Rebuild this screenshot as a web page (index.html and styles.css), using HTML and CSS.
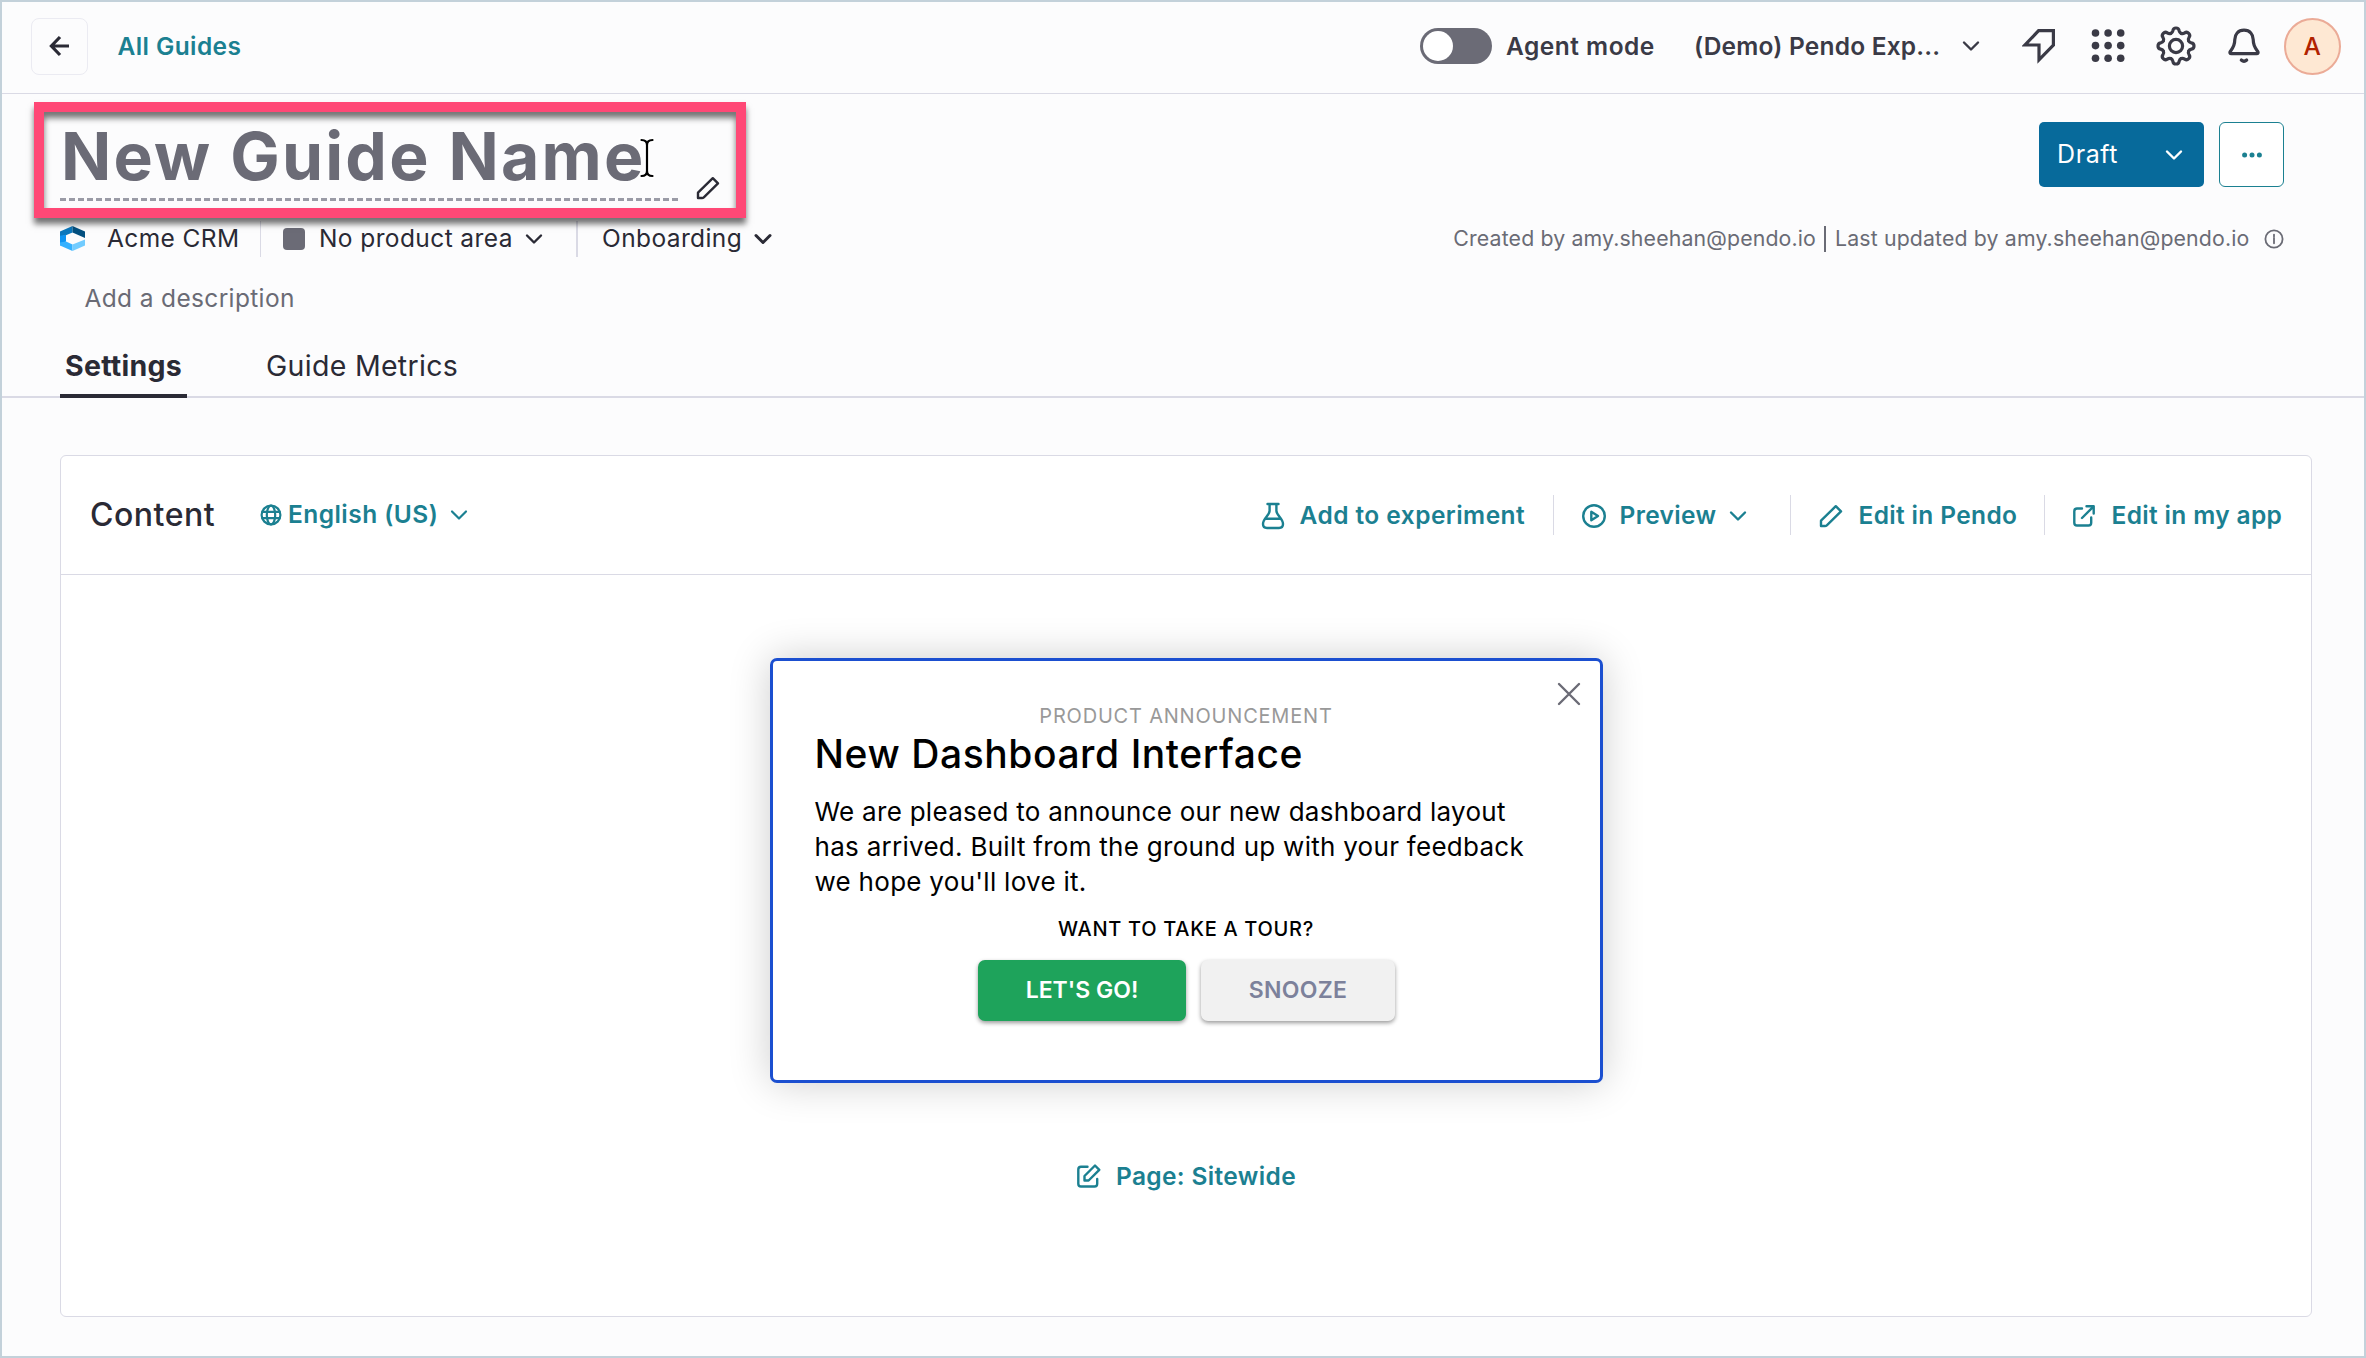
FILE: index.html
```html
<!DOCTYPE html>
<html lang="en">
<head>
<meta charset="utf-8">
<title>New Guide Name</title>
<link rel="stylesheet" href="styles.css">
</head>
<body>
<div class="app">
  <svg width="0" height="0" class="defs" aria-hidden="true">
    <symbol id="chevron" viewBox="0 0 18 12"><path d="M2 2.5 9 9.5 16 2.5"/></symbol>
    <symbol id="pencil" viewBox="0 0 24 24"><path d="M2 22V16.6L16.8 2.2 22 7.4 7.8 21.3Q7 22 6 22Z"/></symbol>
  </svg>

  <header class="topbar">
    <a class="back" aria-label="Back"><svg width="24" height="24" viewBox="0 0 24 24" class="stroke3"><path d="M21 12H3.6M12 3 3.4 12 12 21"/></svg></a>
    <a class="crumb">All Guides</a>
    <div class="tools">
      <span class="toggle"><span class="knob"></span></span>
      <span class="agent">Agent mode</span>
      <span class="account">(Demo) Pendo Exp...</span>
      <svg class="chev" width="18" height="12"><use href="#chevron"/></svg>
      <svg class="flag" width="34" height="36" viewBox="2022 28 34 36"><path d="M2038.6 30.6H2053.4V45.2L2039 59.8V45H2025Z"/></svg>
      <svg class="dots" width="34" height="36" viewBox="2090.5 28 34 36"><g><circle cx="2095" cy="33" r="3.8"/><circle cx="2107.6" cy="33" r="3.8"/><circle cx="2120.2" cy="33" r="3.8"/><circle cx="2095" cy="45.6" r="3.8"/><circle cx="2107.6" cy="45.6" r="3.8"/><circle cx="2120.2" cy="45.6" r="3.8"/><circle cx="2095" cy="58.2" r="3.8"/><circle cx="2107.6" cy="58.2" r="3.8"/><circle cx="2120.2" cy="58.2" r="3.8"/></g></svg>
      <svg class="gear" width="40" height="40" viewBox="-20 -20 40 40">
        <defs><path id="tooth" d="M-5.2-12.6C-3.9-13.1-3.4-14-3.1-15.4C-2.8-17.2-1.6-18 0-18S2.8-17.2 3.1-15.4C3.4-14 3.9-13.1 5.2-12.6"/></defs>
        <use href="#tooth"/><use href="#tooth" transform="rotate(45)"/><use href="#tooth" transform="rotate(90)"/><use href="#tooth" transform="rotate(135)"/><use href="#tooth" transform="rotate(180)"/><use href="#tooth" transform="rotate(225)"/><use href="#tooth" transform="rotate(270)"/><use href="#tooth" transform="rotate(315)"/>
        <circle r="6.6"/>
      </svg>
      <svg class="bell" width="36" height="38" viewBox="2226 27 36 38"><path d="M2244 30.2C2238 30.2 2234.800 34.500 2234.800 39.500C2234.800 46 2232.400 48.600 2230.400 51.200C2229.300 52.700 2230 53.700 2231.500 53.700H2256.500C2258 53.700 2258.700 52.700 2257.600 51.200C2255.600 48.600 2253.200 46 2253.200 39.500C2253.200 34.500 2250 30.200 2244 30.200ZM2241.300 60Q2244 62.600 2246.700 60"/></svg>
      <span class="avatar">A</span>
    </div>
  </header>

  <section class="head">
    <div class="title-row">
      <div class="title-box">
        <h1 class="title">New Guide Name</h1>
        <svg class="title-pencil" width="24" height="24"><use href="#pencil"/></svg>
        <svg class="ibeam" width="20" height="44" viewBox="0 0 20 44"><path class="halo" d="M4.500 4Q10 4 10 9V35Q10 40 4.500 40M15.500 4Q10 4 10 9M10 35Q10 40 15.500 40"/><path d="M4.500 4Q10 4 10 9V35Q10 40 4.500 40M15.500 4Q10 4 10 9M10 35Q10 40 15.500 40"/></svg>
      </div>
      <div class="actions">
        <button class="draft"><span>Draft</span><svg width="18" height="12"><use href="#chevron"/></svg></button>
        <button class="more" aria-label="More"><svg width="24" height="8" viewBox="0 0 24 8"><circle cx="4.600" cy="4" r="2.500"/><circle cx="12" cy="4" r="2.500"/><circle cx="19.400" cy="4" r="2.500"/></svg></button>
      </div>
    </div>

    <div class="meta">
      <svg class="logo" width="25" height="25" viewBox="0 0 25 25">
        <path fill="#0b78bd" d="M0 5.500 12.500 0V6.500L6 9.300 0 10.500Z"/>
        <path fill="#035080" d="M12.500 0 25 5.500V12L12.500 6.500Z"/>
        <path fill="#0d94f2" d="M0 9.800 6 8.800V15.500L0 19.500Z"/>
        <path fill="#35b1ff" d="M0 19.500 0 16.500 6 15.500 12.500 18.500V25Z"/>
        <path fill="#72ccff" d="M12.500 18.500 25 13.500V19.500L12.500 25Z"/>
      </svg>
      <span class="app-name">Acme CRM</span>
      <i class="rule"></i>
      <span class="swatch"></span>
      <span class="area">No product area</span>
      <svg class="chev" width="18" height="12"><use href="#chevron"/></svg>
      <i class="rule thick"></i>
      <span class="segment">Onboarding</span>
      <svg class="chev bold" width="18" height="12"><use href="#chevron"/></svg>
      <div class="credits">
        <span class="created">Created by amy.sheehan@pendo.io</span>
        <i class="bar"></i>
        <span class="updated">Last updated by amy.sheehan@pendo.io</span>
        <svg width="20" height="20" viewBox="0 0 20 20"><circle cx="10" cy="10" r="8.600"/><path d="M10 9V14.300M10 5.600V7.400"/></svg>
      </div>
    </div>

    <p class="description">Add a description</p>

    <nav class="tabs">
      <a class="tab active">Settings</a>
      <a class="tab">Guide Metrics</a>
    </nav>
  </section>

  <main class="main">
    <section class="card">
      <div class="card-head">
        <h2>Content</h2>
        <a class="lang"><svg width="22" height="22" viewBox="0 0 22 22"><circle cx="11" cy="11" r="9.400"/><ellipse cx="11" cy="11" rx="4.200" ry="9.400"/><path d="M2.500 7.800H19.500M2.500 14.200H19.500"/></svg><span>English (US)</span><svg class="chev" width="18" height="12"><use href="#chevron"/></svg></a>
        <div class="links">
          <a class="link experiment"><svg width="24" height="28" viewBox="0 0 24 28"><path d="M6.500 2H17.500M8.600 2.500V8.800C8.600 13.500 2 16.500 2 22C2 24.600 3.400 26 6 26H18C20.600 26 22 24.600 22 22C22 16.500 15.400 13.500 15.400 8.800V2.500M4.800 16.800H19.200"/></svg><span>Add to experiment</span></a>
          <a class="link preview"><svg width="26" height="26" viewBox="0 0 26 26"><circle cx="13" cy="13" r="10.800"/><path d="M10.300 8.800V17.200L17 13Z"/></svg><span>Preview</span><svg class="chev" width="18" height="12"><use href="#chevron"/></svg></a>
          <a class="link pendo"><svg width="24" height="24"><use href="#pencil"/></svg><span>Edit in Pendo</span></a>
          <a class="link myapp"><svg width="24" height="24" viewBox="0 0 24 24"><path d="M10 4.500H5Q2.300 4.500 2.300 7.200V18.800Q2.300 21.500 5 21.500H16.500Q19.200 21.500 19.200 18.800V13.500M14.500 2.300H21.700V9.500M21.500 2.500 10 14"/></svg><span>Edit in my app</span></a>
        </div>
      </div>

      <div class="canvas">
        <article class="guide">
          <svg class="close" width="24" height="24" viewBox="0 0 24 24"><path d="M2 2 22 22M22 2 2 22"/></svg>
          <p class="eyebrow">PRODUCT ANNOUNCEMENT</p>
          <h3>New Dashboard Interface</h3>
          <p class="copy">We are pleased to announce our new dashboard layout<br>has arrived. Built from the ground up with your feedback<br>we hope you'll love it.</p>
          <p class="ask">WANT TO TAKE A TOUR?</p>
          <div class="buttons">
            <button class="go">LET'S GO!</button>
            <button class="snooze">SNOOZE</button>
          </div>
        </article>
        <a class="sitewide"><svg width="26" height="26" viewBox="0 0 26 26"><path d="M11.500 3.800H5Q2.300 3.800 2.300 6.500V20.800Q2.300 23.500 5 23.500H18.500Q21.200 23.500 21.200 20.800V16M8.500 17.500V13L19 2.500 23.300 6.800 12.600 17.500Z"/></svg><span>Page: Sitewide</span></a>
      </div>
    </section>
  </main>
</div>
</body>
</html>
```
FILE: styles.css
```css
* { box-sizing: border-box; margin: 0; padding: 0; }

body {
  font-family: Inter, "Liberation Sans", sans-serif;
  font-size: 24.5px;
  line-height: 1;
  letter-spacing: 0.4px;
  color: #2a2a35;
}

button { font: inherit; letter-spacing: inherit; border: 0; }
svg { display: block; flex: none; fill: none; stroke: currentColor; stroke-width: 2.4; stroke-linejoin: round; stroke-linecap: round; }
span, a, h1, h2, h3, p { white-space: nowrap; }
.defs { position: absolute; }

.app {
  width: 2366px;
  height: 1358px;
  display: flex;
  flex-direction: column;
  background: #fcfcfd;
  border: 2px solid #c3d1da;
}

/* Top bar */
.topbar {
  flex: none;
  height: 92px;
  display: flex;
  align-items: center;
  padding: 0 23px 3px 29px;
  border-bottom: 1px solid #dadae5;
  color: #3a3a46;
}
.back {
  width: 57px;
  height: 57px;
  display: grid;
  place-items: center;
  border: 1px solid #ebebf2;
  border-radius: 8px;
  color: #2a2a35;
}
.stroke3 { stroke-width: 3.2; stroke-linecap: butt; stroke-linejoin: miter; }
.crumb { margin-left: 29.5px; font-weight: 600; color: #1b8091; }
.tools { margin-left: auto; display: flex; align-items: center; font-weight: 600; }
.toggle { width: 72px; height: 36px; padding: 3px; border-radius: 18px; background: #6b6b76; }
.knob { display: block; width: 30px; height: 30px; border-radius: 50%; background: #fff; }
.agent { width: 150px; margin-left: 14px; letter-spacing: 0.5px; }
.account { width: 248px; margin-left: 38px; letter-spacing: 0.2px; }
.account + .chev { margin-left: 20px; }
.flag { margin-left: 42px; stroke-width: 3.2; stroke-linejoin: miter; }
.dots { margin-left: 34.5px; fill: currentColor; stroke: none; }
.gear { margin-left: 31px; stroke-width: 3.2; }
.bell { margin-left: 30.5px; stroke-width: 3.2; }
.avatar {
  width: 57px;
  height: 57px;
  margin-left: 22px;
  display: grid;
  place-items: center;
  border: 2px solid #ebab97;
  border-radius: 50%;
  background: #fee8d3;
  color: #b12200;
  font-weight: 500;
}

/* Guide heading */
.head { flex: none; display: flex; flex-direction: column; height: 304px; border-bottom: 2px solid #dadae5; }
.title-row { display: flex; justify-content: space-between; padding: 8px 80px 0 32px; }
.title-box {
  position: relative;
  z-index: 1;
  width: 712px;
  height: 116px;
  padding-left: 16px;
  border: 10px solid #ff4876;
  box-shadow: 0 6px 6px rgba(0, 0, 0, 0.55), inset 0 6px 6px rgba(0, 0, 0, 0.55);
}
.title {
  width: 621px;
  height: 89px;
  padding: 12px 0 0 1px;
  font-size: 66px;
  line-height: 65px;
  font-weight: 700;
  letter-spacing: 2.2px;
  color: #6b6b76;
  background: repeating-linear-gradient(90deg, #9a9ba6 0 6px, transparent 6px 9px) 6px 86px / 609px 3px no-repeat;
  background-position: 0 86px;
  background-size: 620px 3px;
}
.title-pencil { position: absolute; left: 652px; top: 64px; }
.ibeam { position: absolute; left: 593px; top: 24px; stroke: #000; stroke-width: 2.2; }
.ibeam .halo { stroke: #fff; stroke-width: 6; }
.actions { display: flex; gap: 15px; padding-top: 20px; }
.draft {
  width: 165px;
  height: 65px;
  display: flex;
  align-items: center;
  justify-content: space-between;
  padding: 0 21px 0 18px;
  border-radius: 5px;
  background: #076a9b;
  color: #fff;
  letter-spacing: 0.6px;
}
.draft span { font-size: 25px; }
.more { width: 65px; height: 65px; display: grid; place-items: center; border: 1px solid #1b8091; border-radius: 6px; background: #fff; color: #1b8091; }
.more svg { fill: currentColor; stroke: none; }

.meta { display: flex; align-items: center; height: 36px; margin-top: 3px; padding: 0 80px 1px 58px; }
.logo { stroke: none; }
.app-name { width: 131px; margin-left: 22px; }
.rule { width: 1px; height: 36px; margin-left: 22px; background: #dadae5; }
.rule.thick { width: 2px; margin-left: 34px; }
.swatch { width: 22px; height: 22px; margin-left: 22px; border-radius: 4px; background: #6b6b76; }
.area { width: 194px; margin-left: 14px; }
.area + .chev { margin-left: 12px; margin-right: -1px; }
.segment { width: 142px; margin-left: 24px; }
.chev.bold { margin-left: 10px; stroke-width: 3; }
.credits { margin-left: auto; display: flex; align-items: center; font-size: 21.3px; letter-spacing: 0.14px; color: #6a6b75; }
.bar { width: 2px; height: 26px; margin: 0 9px 0 8px; background: #6a6b75; }
.updated { width: 417px; margin-right: 12px; }
.credits svg { stroke-width: 1.8; }

.description { margin: 29px 0 0 82.5px; letter-spacing: 0.35px; color: #6a6b75; }
.tabs { display: flex; gap: 77px; margin: auto 0 -2px 58px; }
.tab { height: 52px; padding: 6px 2px 0; font-size: 28.5px; letter-spacing: 0.3px; }
.tab.active { width: 127px; padding: 6px 5px 0; font-weight: 700; letter-spacing: 0.25px; border-bottom: 4px solid #2a2a35; }

/* Content card */
.main { flex: 1; padding: 57px 52px 39px 58px; display: flex; }
.card { flex: 1; display: flex; flex-direction: column; background: #fff; border: 1px solid #dadae5; border-radius: 6px; }
.card-head { height: 119px; display: flex; align-items: center; padding: 0 29.5px 0 28px; border-bottom: 1px solid #dadae5; }
.card-head h2 { width: 126px; padding-left: 1px; font-size: 32px; font-weight: 500; letter-spacing: 0.5px; }
.lang { display: flex; align-items: center; margin-left: 45px; padding-bottom: 1px; font-weight: 600; color: #1b8091; }
.lang span { width: 150px; margin-left: 6px; letter-spacing: 0.45px; }
.lang .chev { margin-left: 12px; }
.lang svg { stroke-width: 2.2; }
.links { margin-left: auto; display: flex; font-weight: 600; color: #1b8091; }
.link { display: flex; align-items: center; height: 40px; padding-top: 1px; letter-spacing: 0.35px; }
.link + .link { border-left: 1px solid #dadae5; }
.link span { margin-left: 16px; }
.experiment { width: 292px; }
.experiment span { margin-left: 15px; letter-spacing: 0.45px; }
.preview { width: 237px; padding-left: 27px; }
.preview span { width: 97px; margin-left: 13px; }
.preview .chev { margin-left: 12px; }
.pendo { width: 254px; padding-left: 28px; }
.myapp { width: 238px; padding-left: 27px; }

.canvas { flex: 1; display: flex; flex-direction: column; align-items: center; padding-top: 83px; }
.guide {
  position: relative;
  width: 833px;
  height: 425px;
  padding: 45px 42px 0;
  border: 3px solid #1b4fd0;
  border-radius: 7px;
  background: #fff;
  color: #000;
  box-shadow: 0 0 42px rgba(0, 0, 0, 0.2);
}
.close { position: absolute; right: 19px; top: 21px; stroke: #6b6b76; }
.eyebrow { font-size: 20px; line-height: 20px; letter-spacing: 0.8px; text-align: center; color: #999; }
.guide h3 { margin-top: 8px; font-size: 39px; line-height: 40px; font-weight: 500; letter-spacing: 0.56px; }
.copy { margin-top: 20px; font-size: 26px; line-height: 35.2px; letter-spacing: 0.28px; }
.ask { margin-top: 19px; font-size: 20px; line-height: 20px; font-weight: 500; letter-spacing: 0.7px; text-align: center; }
.buttons { display: flex; justify-content: center; gap: 15px; margin-top: 21.5px; padding-left: 1px; }
.buttons button { height: 61px; border-radius: 7px; font-size: 23px; font-weight: 600; box-shadow: 0 2px 4px rgba(0, 0, 0, 0.4); }
.go { width: 208px; background: #1ea35b; color: #fff; letter-spacing: 0; }
.snooze { width: 194px; background: #f1f1f1; color: #7c819b; letter-spacing: 0.3px; }
.sitewide { display: flex; align-items: center; gap: 14px; margin-top: 80px; font-weight: 600; letter-spacing: 0.35px; color: #1b8091; }
```
